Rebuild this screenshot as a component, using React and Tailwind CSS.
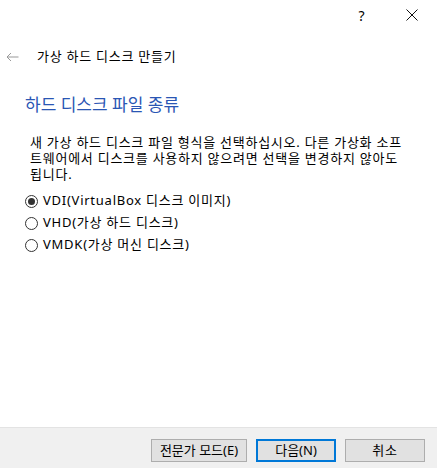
import React, { useState } from 'react';

const formats = [
  { id: 'vdi', label: 'VDI(VirtualBox 디스크 이미지)' },
  { id: 'vhd', label: 'VHD(가상 하드 디스크)' },
  { id: 'vmdk', label: 'VMDK(가상 머신 디스크)' },
];

const Radio = ({ checked, label, onClick }) => (
  <div className="flex items-center h-[22px] cursor-default" onClick={onClick}>
    <span className="w-[13px] h-[13px] rounded-full border border-[#333] bg-white flex items-center justify-center">
      {checked && <span className="w-[7px] h-[7px] rounded-full bg-[#333]" />}
    </span>
    <span className="ml-[5px]">{label}</span>
  </div>
);

const App = () => {
  const [selected, setSelected] = useState('vdi');

  return (
    <div
      className="w-[437px] h-[468px] bg-white flex flex-col text-[13px] tracking-[0.75px] text-black"
      style={{ fontFamily: '"Noto Sans", "Noto Sans CJK KR", sans-serif' }}
    >
      {/* title bar */}
      <div className="h-[30px] flex items-center justify-end">
        <span className="w-[50px] text-center text-[14px]">?</span>
        <span className="w-[50px] flex justify-center">
          <svg width="12" height="12" viewBox="0 0 12 12" stroke="#111" strokeWidth="1">
            <path d="M0.5 0.5 L11.5 11.5 M11.5 0.5 L0.5 11.5" />
          </svg>
        </span>
      </div>

      {/* wizard header */}
      <div className="h-[24px] mt-[15px] flex items-center">
        <svg className="ml-[6px]" width="13" height="10" viewBox="0 0 13 10" fill="none" stroke="#999" strokeWidth="1">
          <path d="M12.5 5 H1 M5 1 L1 5 L5 9" />
        </svg>
        <span className="ml-[18px]">가상 하드 디스크 만들기</span>
      </div>

      <div className="flex-1 px-[25px]">
        <h2 className="mt-[24px] text-[17px] leading-[24px] tracking-normal text-[#2a56b4]">하드 디스크 파일 종류</h2>

        <div className="mt-[17px] ml-[5px] leading-[16px]">
          <div>새 가상 하드 디스크 파일 형식을 선택하십시오. 다른 가상화 소프</div>
          <div>트웨어에서 디스크를 사용하지 않으려면 선택을 변경하지 않아도</div>
          <div>됩니다.</div>
        </div>

        <div className="mt-[8px] flex flex-col">
          {formats.map(f => (
            <Radio
              key={f.id}
              checked={selected === f.id}
              label={f.label}
              onClick={() => setSelected(f.id)}
            />
          ))}
        </div>
      </div>

      {/* button bar */}
      <div className="h-[41px] bg-[#f0f0f0] border-t border-[#e3e3e3] flex items-start justify-end pr-[12px] pt-[11px] gap-[9px]">
        <button className="w-[96px] h-[23px] bg-[#e1e1e1] border border-[#adadad] tracking-normal">전문가 모드(E)</button>
        <button className="w-[80px] h-[23px] bg-[#e1e1e1] border-2 border-[#0078d7] tracking-normal">다음(N)</button>
        <button className="w-[80px] h-[23px] bg-[#e1e1e1] border border-[#adadad]">취소</button>
      </div>
    </div>
  );
};

export default App;
